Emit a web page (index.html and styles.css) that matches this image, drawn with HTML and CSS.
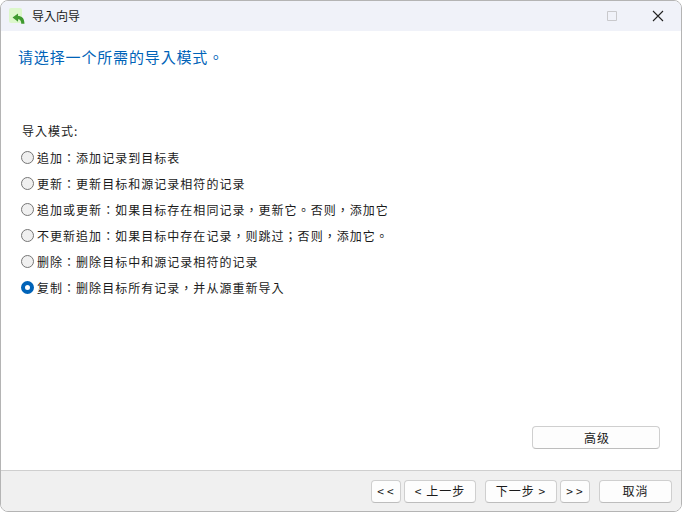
FILE: index.html
```html
<!DOCTYPE html>
<html lang="zh-TW">
<head>
<meta charset="utf-8">
<title>导入向导</title>
<link rel="stylesheet" href="styles.css">
</head>
<body>
<div class="window">
  <header class="titlebar">
    <span class="app-icon">
      <svg width="13" height="11" viewBox="0 0 14 12"><path d="M0.5 5 L6.5 0.5 V3.2 C10.5 3.2 13.5 5.5 13.5 11.8 H10 C10 8.5 8.8 6.8 6.5 6.8 V9.5 Z" fill="#3f9a2f"/></svg>
    </span>
    <span class="title">导入向导</span>
    <span class="controls">
      <span class="ctl"><svg width="10" height="10" viewBox="0 0 10 10"><path d="M0.5 0.5H9.5V9.5H0.5Z" fill="none" stroke="#c9c9cc"/></svg></span>
      <span class="ctl"><svg width="12" height="12" viewBox="0 0 12 12"><path d="M1 1L11 11M11 1L1 11" stroke="#222" stroke-width="1.1"/></svg></span>
    </span>
  </header>
  <main class="content">
    <h1 class="heading">请选择一个所需的导入模式。</h1>
    <p class="label">导入模式:</p>
    <div class="options">
      <label class="option"><span class="radio"></span>追加：添加记录到目标表</label>
      <label class="option"><span class="radio"></span>更新：更新目标和源记录相符的记录</label>
      <label class="option"><span class="radio"></span>追加或更新：如果目标存在相同记录，更新它。否则，添加它</label>
      <label class="option"><span class="radio"></span>不更新追加：如果目标中存在记录，则跳过；否则，添加它。</label>
      <label class="option"><span class="radio"></span>删除：删除目标中和源记录相符的记录</label>
      <label class="option"><span class="radio on"></span>复制：删除目标所有记录，并从源重新导入</label>
    </div>
    <div class="advanced-row"><button class="btn advanced">高级</button></div>
  </main>
  <footer class="footer">
    <button class="btn nav">&lt;&lt;</button>
    <button class="btn step">&lt; 上一步</button>
    <button class="btn step next">下一步 &gt;</button>
    <button class="btn nav">&gt;&gt;</button>
    <button class="btn step cancel">取消</button>
  </footer>
</div>
</body>
</html>
```
FILE: styles.css
```css
* { box-sizing: border-box; }
html, body { margin: 0; height: 100%; background: #fff; }
body {
  font-family: "Noto Sans CJK TC", "Liberation Sans", sans-serif;
  font-size: 12px;
  color: #1a1a1a;
}
.window {
  width: 682px;
  height: 512px;
  display: flex;
  flex-direction: column;
  border: 1px solid #b4b4b4;
  border-radius: 8px;
  overflow: hidden;
  background: #fff;
}
.titlebar {
  height: 30px;
  flex: none;
  display: flex;
  align-items: center;
  background: #f0f2f9;
  padding-left: 8px;
}
.app-icon {
  width: 13px;
  height: 15px;
  margin-bottom: 2px;
  background: #dcf7cb;
  border-radius: 2px;
  display: flex;
  align-items: flex-end;
  justify-content: flex-end;
  flex: none;
}
.app-icon svg { margin: 0 -3px -1px 0; flex: none; }
.title { margin-left: 10px; font-size: 12px; line-height: 16px; }
.controls { margin-left: auto; display: flex; height: 100%; }
.ctl { width: 46px; display: flex; align-items: center; justify-content: center; }
.content { flex: 1; display: flex; flex-direction: column; padding: 0 21px 0 20px; min-height: 0; }
.heading {
  margin: 16px 0 0 -3px;
  font-size: 15px;
  font-weight: 400;
  line-height: 20px;
  letter-spacing: 0.85px;
  color: #0063b8;
}
.label { margin: 56px 0 0 1px; font-size: 12px; line-height: 16px; letter-spacing: 1px; }
.options { margin-top: 5px; display: flex; flex-direction: column; }
.option {
  height: 26px;
  display: flex;
  align-items: center;
  font-size: 12px;
  letter-spacing: 1.03px;
}
.radio {
  width: 13px;
  height: 13px;
  border: 1.5px solid #767676;
  border-radius: 50%;
  background: #f0f0f0;
  margin-right: 3px;
  flex: none;
}
.radio.on { border: 4px solid #0063b8; background: #fff; }
.advanced-row { margin-top: auto; margin-bottom: 21px; display: flex; justify-content: flex-end; }
.btn {
  font-family: inherit;
  font-size: 12px;
  height: 23px;
  padding: 0 0 1px;
  border: 1px solid #cfcfcf;
  border-bottom-color: #bdbdbd;
  border-radius: 4px;
  background: #fdfdfd;
  color: #1a1a1a;
  letter-spacing: 1px;
}
.advanced { width: 128px; padding-left: 2px; }
.footer {
  height: 41px;
  flex: none;
  display: flex;
  align-items: center;
  justify-content: flex-end;
  gap: 3px;
  padding: 0 9px 0 0;
  background: #f0f0f0;
  border-top: 1px solid #cfcfcf;
}
.nav { width: 30px; letter-spacing: 3px; padding-left: 2px; }
.step { width: 72px; }
.next { margin-left: 6px; }
.cancel { margin-left: 6px; width: 73px; }
```
